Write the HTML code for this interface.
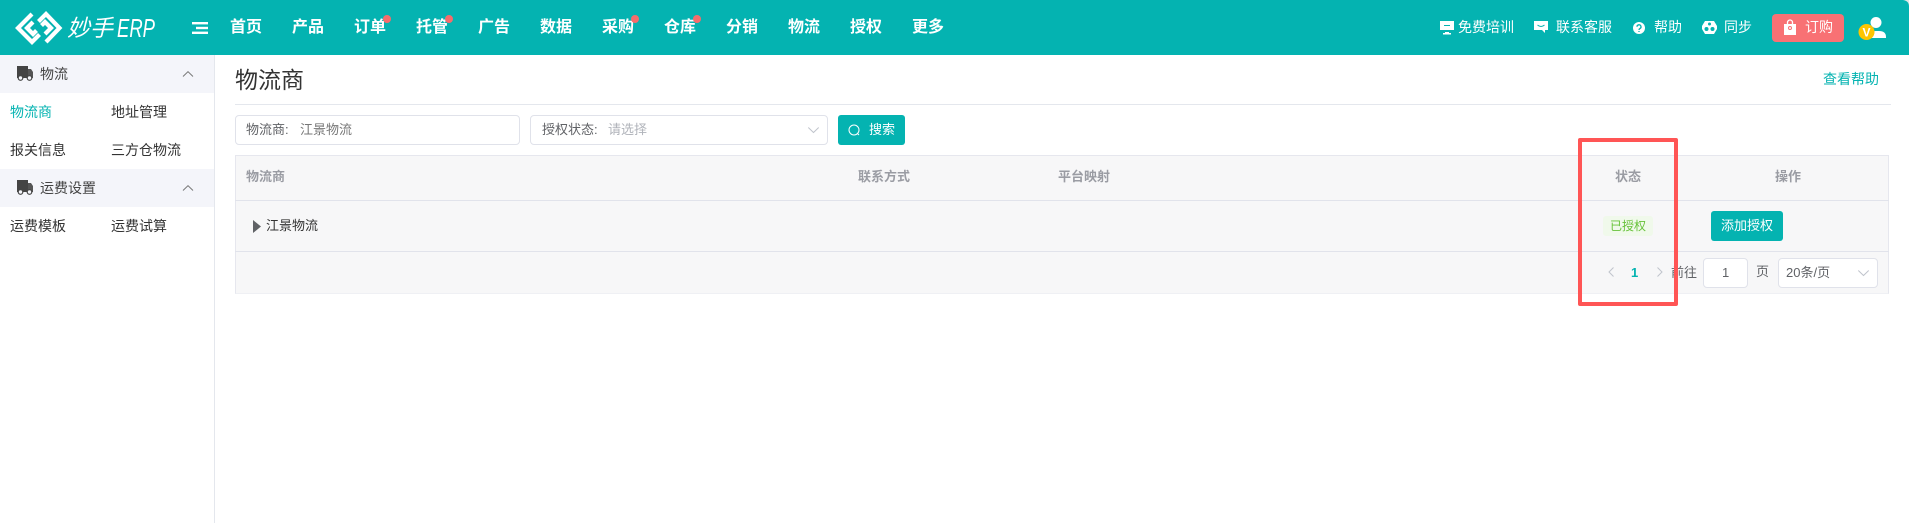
<!DOCTYPE html>
<html><head><meta charset="utf-8"><style>
html,body{margin:0;padding:0;background:#fff}
body{width:1909px;height:523px;position:relative;overflow:hidden;font-family:"Liberation Sans","Noto Sans CJK SC",sans-serif;color:#333}
.t{position:absolute;white-space:nowrap;line-height:20px;height:20px}
.b{position:absolute;box-sizing:border-box}
.n{font-size:16px;font-weight:700;color:#fff;top:18px}
.d{position:absolute;width:8px;height:8px;border-radius:50%;background:#f56c6c;top:15px}
.r{font-size:14px;color:#fff;top:17px}
.s{font-size:14px;color:#333}
.h{font-size:13px;font-weight:700;color:#9a9ca3;top:167px}
.f{font-size:13px;color:#606266}
svg{position:absolute;overflow:visible}
</style></head><body>
<div class="b" style="left:0;top:0;width:1909px;height:55px;background:#04b3b1"></div>
<svg style="left:0;top:0" width="70" height="55" fill="none" stroke="#fff" stroke-width="4.2"><path d="M32 14 18 28 32 42 39.500 34.500"/><path d="M46 42 59.500 28 46 14 38.500 21.500"/><path d="M33 22 27 28 33 34 36.500 30.500"/><path d="M45 34 51 28 45 22 41.500 25.500"/></svg>
<div class="t" style="left:67px;top:16px;font-size:23px;line-height:24px;height:24px;color:#fff;font-style:italic">妙手</div>
<div class="t" style="left:117px;top:15px;font-size:26px;line-height:26px;height:26px;color:#fff;font-style:italic;transform:scaleX(.71);transform-origin:0 0">ERP</div>
<svg style="left:192px;top:22px" width="16" height="12" fill="#fff"><rect x="0" y="0" width="16" height="2.4"/><rect x="4" y="4.8" width="12" height="2.4"/><rect x="0" y="9.6" width="16" height="2.4"/></svg>
<div class="t n" style="left:230px">首页</div><div class="t n" style="left:292px">产品</div><div class="t n" style="left:354px">订单</div><div class="t n" style="left:416px">托管</div><div class="t n" style="left:478px">广告</div><div class="t n" style="left:540px">数据</div><div class="t n" style="left:602px">采购</div><div class="t n" style="left:664px">仓库</div><div class="t n" style="left:726px">分销</div><div class="t n" style="left:788px">物流</div><div class="t n" style="left:850px">授权</div><div class="t n" style="left:912px">更多</div>
<i class="d" style="left:383px"></i><i class="d" style="left:445px"></i><i class="d" style="left:631px"></i><i class="d" style="left:693px"></i>
<svg style="left:1440px;top:21px" width="14" height="14" fill="#fff"><path d="M0 0h14v9H0zM5 11h4v1h2v1.500H3V12h2z"/><path d="M4 4h6v1H4z" fill="#04b3b1"/></svg>
<div class="t r" style="left:1458px">免费培训</div>
<svg style="left:1534px;top:20px" width="14" height="14" fill="#fff"><path d="M0 1h14v9h-3v3L8 10H0z"/><path d="M3.500 5q3.500 3 7 0" fill="none" stroke="#04b3b1"/></svg>
<div class="t r" style="left:1556px">联系客服</div>
<svg style="left:1633px;top:22px" width="12" height="12"><circle cx="6" cy="6" r="6" fill="#fff"/><path d="M4 4.800a2 2 0 1 1 3 1.700q-1 .5-1 1.500M6 9v1" fill="none" stroke="#04b3b1" stroke-width="1.300"/></svg>
<div class="t r" style="left:1654px">帮助</div>
<svg style="left:1702px;top:21px" width="15" height="13"><path d="M3 0h9l3 5v3l-3 5H3L0 8V5z" fill="#fff"/><circle cx="4.500" cy="8" r="2" fill="#04b3b1"/><circle cx="10.500" cy="8" r="2" fill="#04b3b1"/><circle cx="7.500" cy="3" r="1.500" fill="#04b3b1"/></svg>
<div class="t r" style="left:1724px">同步</div>
<div class="b" style="left:1772px;top:14px;width:72px;height:28px;border-radius:4px;background:#f87174"></div>
<svg style="left:1784px;top:20px" width="12" height="15"><path d="M0 4h12v11H0z" fill="#fff"/><path d="M3.500 6V2.500a2.500 2.500 0 0 1 5 0V6" fill="none" stroke="#fff" stroke-width="1.300"/><circle cx="6" cy="8" r="1.500" fill="none" stroke="#f87174"/></svg>
<div class="t r" style="left:1805px">订购</div>
<svg style="left:1859px;top:16px" width="30" height="28"><circle cx="17" cy="6.500" r="5.500" fill="#fff"/><path d="M9 22q0-7 8-7h3q7 0 7 6v1z" fill="#fff"/><circle cx="7.500" cy="16" r="8" fill="#fdc500"/><text x="7.500" y="20.500" font-size="12" font-weight="700" fill="#fff" text-anchor="middle" font-family="Liberation Sans">V</text></svg>
<svg style="left:1903px;top:0" width="6" height="6"><path d="M0 0h6v6q0-5-6-6z" fill="#dfe6e6"/></svg>

<div class="b" style="left:0;top:55px;width:215px;height:468px;border-right:1px solid #e4e7ed"></div>
<div class="b" style="left:0;top:55px;width:214px;height:38px;background:#f4f5fa"></div>
<div class="b" style="left:0;top:169px;width:214px;height:38px;background:#f4f5fa"></div>
<svg style="left:17px;top:66px" width="16" height="15"><path d="M0 0h11v12H0z" fill="#444"/><path d="M11 3h3l2 3v6h-5z" fill="#555"/><circle cx="3.500" cy="12" r="2.300" fill="#f4f5fa" stroke="#444" stroke-width="1.200"/><circle cx="12.500" cy="12" r="2.300" fill="#f4f5fa" stroke="#444" stroke-width="1.200"/></svg>
<svg style="left:17px;top:180px" width="16" height="15"><path d="M0 0h11v12H0z" fill="#444"/><path d="M11 3h3l2 3v6h-5z" fill="#555"/><circle cx="3.500" cy="12" r="2.300" fill="#f4f5fa" stroke="#444" stroke-width="1.200"/><circle cx="12.500" cy="12" r="2.300" fill="#f4f5fa" stroke="#444" stroke-width="1.200"/></svg>
<div class="t s" style="left:40px;top:64px;color:#444">物流</div>
<div class="t s" style="left:40px;top:178px;color:#444">运费设置</div>
<svg style="left:183px;top:71px" width="10" height="6" fill="none" stroke="#777"><path d="M0 5.500 5 .7l5 4.800"/></svg>
<svg style="left:183px;top:185px" width="10" height="6" fill="none" stroke="#777"><path d="M0 5.500 5 .7l5 4.800"/></svg>
<div class="t s" style="left:10px;top:102px;color:#04b3b1">物流商</div><div class="t s" style="left:111px;top:102px">地址管理</div>
<div class="t s" style="left:10px;top:140px">报关信息</div><div class="t s" style="left:111px;top:140px">三方仓物流</div>
<div class="t s" style="left:10px;top:216px">运费模板</div><div class="t s" style="left:111px;top:216px">运费试算</div>

<div class="t" style="left:235px;top:69px;font-size:23px;line-height:23px;height:23px;color:#333">物流商</div>
<div class="t" style="left:1823px;top:69px;font-size:14px;color:#04b3b1">查看帮助</div>
<div class="b" style="left:235px;top:104px;width:1656px;height:1px;background:#e4e7ed"></div>

<div class="b" style="left:235px;top:115px;width:285px;height:30px;border:1px solid #e0e2ea;border-radius:4px"></div>
<div class="t f" style="left:246px;top:120px">物流商:</div><div class="t f" style="left:300px;top:120px;color:#777">江景物流</div>
<div class="b" style="left:530px;top:115px;width:298px;height:30px;border:1px solid #e0e2ea;border-radius:4px"></div>
<div class="t f" style="left:542px;top:120px">授权状态:</div><div class="t f" style="left:608px;top:120px;color:#b0b3ba">请选择</div>
<svg style="left:808px;top:127px" width="11" height="6" fill="none" stroke="#c0c4cc"><path d="M.3.500 5.500 5.500 10.700.5"/></svg>
<div class="b" style="left:838px;top:115px;width:67px;height:30px;background:#04b3b1;border-radius:3px"></div>
<svg style="left:848px;top:124px" width="13" height="13" fill="none" stroke="#fff" stroke-width="1"><circle cx="6" cy="6" r="5"/><path d="M9.500 9.500 11 11"/></svg>
<div class="t" style="left:869px;top:120px;font-size:13px;color:#fff">搜索</div>

<div class="b" style="left:235px;top:155px;width:1654px;height:139px;background:#f7f7f8;border:1px solid #e6e7ee;border-bottom-color:#eff0f4"></div>
<div class="b" style="left:235px;top:200px;width:1654px;height:1px;background:#e1e3eb"></div>
<div class="b" style="left:235px;top:251px;width:1654px;height:1px;background:#e1e3eb"></div>
<div class="t h" style="left:246px">物流商</div>
<div class="t h" style="left:858px">联系方式</div>
<div class="t h" style="left:1058px">平台映射</div>
<div class="t h" style="left:1615px">状态</div>
<div class="t h" style="left:1775px">操作</div>
<svg style="left:253px;top:220px" width="8" height="13"><path d="M0 0 8 6.500 0 13z" fill="#606266"/></svg>
<div class="t" style="left:266px;top:216px;font-size:13px;color:#333">江景物流</div>
<div class="b" style="left:1603px;top:216px;width:50px;height:20px;background:#f0f9eb;border-radius:3px"></div>
<div class="t" style="left:1610px;top:216px;font-size:12px;color:#67c23a">已授权</div>
<div class="b" style="left:1711px;top:211px;width:72px;height:30px;background:#04b3b1;border-radius:3px"></div>
<div class="t" style="left:1721px;top:216px;font-size:13px;color:#fff">添加授权</div>
<svg style="left:1608px;top:267px" width="6" height="10" fill="none" stroke="#c0c4cc"><path d="M5.500.5 1 5l4.500 4.500"/></svg>
<div class="t" style="left:1631px;top:263px;font-size:13px;font-weight:700;color:#04b3b1">1</div>
<svg style="left:1657px;top:267px" width="6" height="10" fill="none" stroke="#c0c4cc"><path d="M.5.500 5 5 .5 9.500"/></svg>
<div class="t f" style="left:1671px;top:263px">前往</div>
<div class="b" style="left:1703px;top:258px;width:45px;height:30px;border:1px solid #e0e2ea;border-radius:4px;background:#fff"></div>
<div class="t f" style="left:1722px;top:263px">1</div>
<div class="t f" style="left:1756px;top:262px">页</div>
<div class="b" style="left:1778px;top:258px;width:100px;height:30px;border:1px solid #e0e2ea;border-radius:4px;background:#fff"></div>
<div class="t f" style="left:1786px;top:263px">20条/页</div>
<svg style="left:1858px;top:270px" width="11" height="6" fill="none" stroke="#c0c4cc"><path d="M.3.500 5.500 5.500 10.700.5"/></svg>

<div class="b" style="left:1578px;top:138px;width:100px;height:168px;border:4px solid #ff5555;border-radius:2px"></div>
</body></html>
